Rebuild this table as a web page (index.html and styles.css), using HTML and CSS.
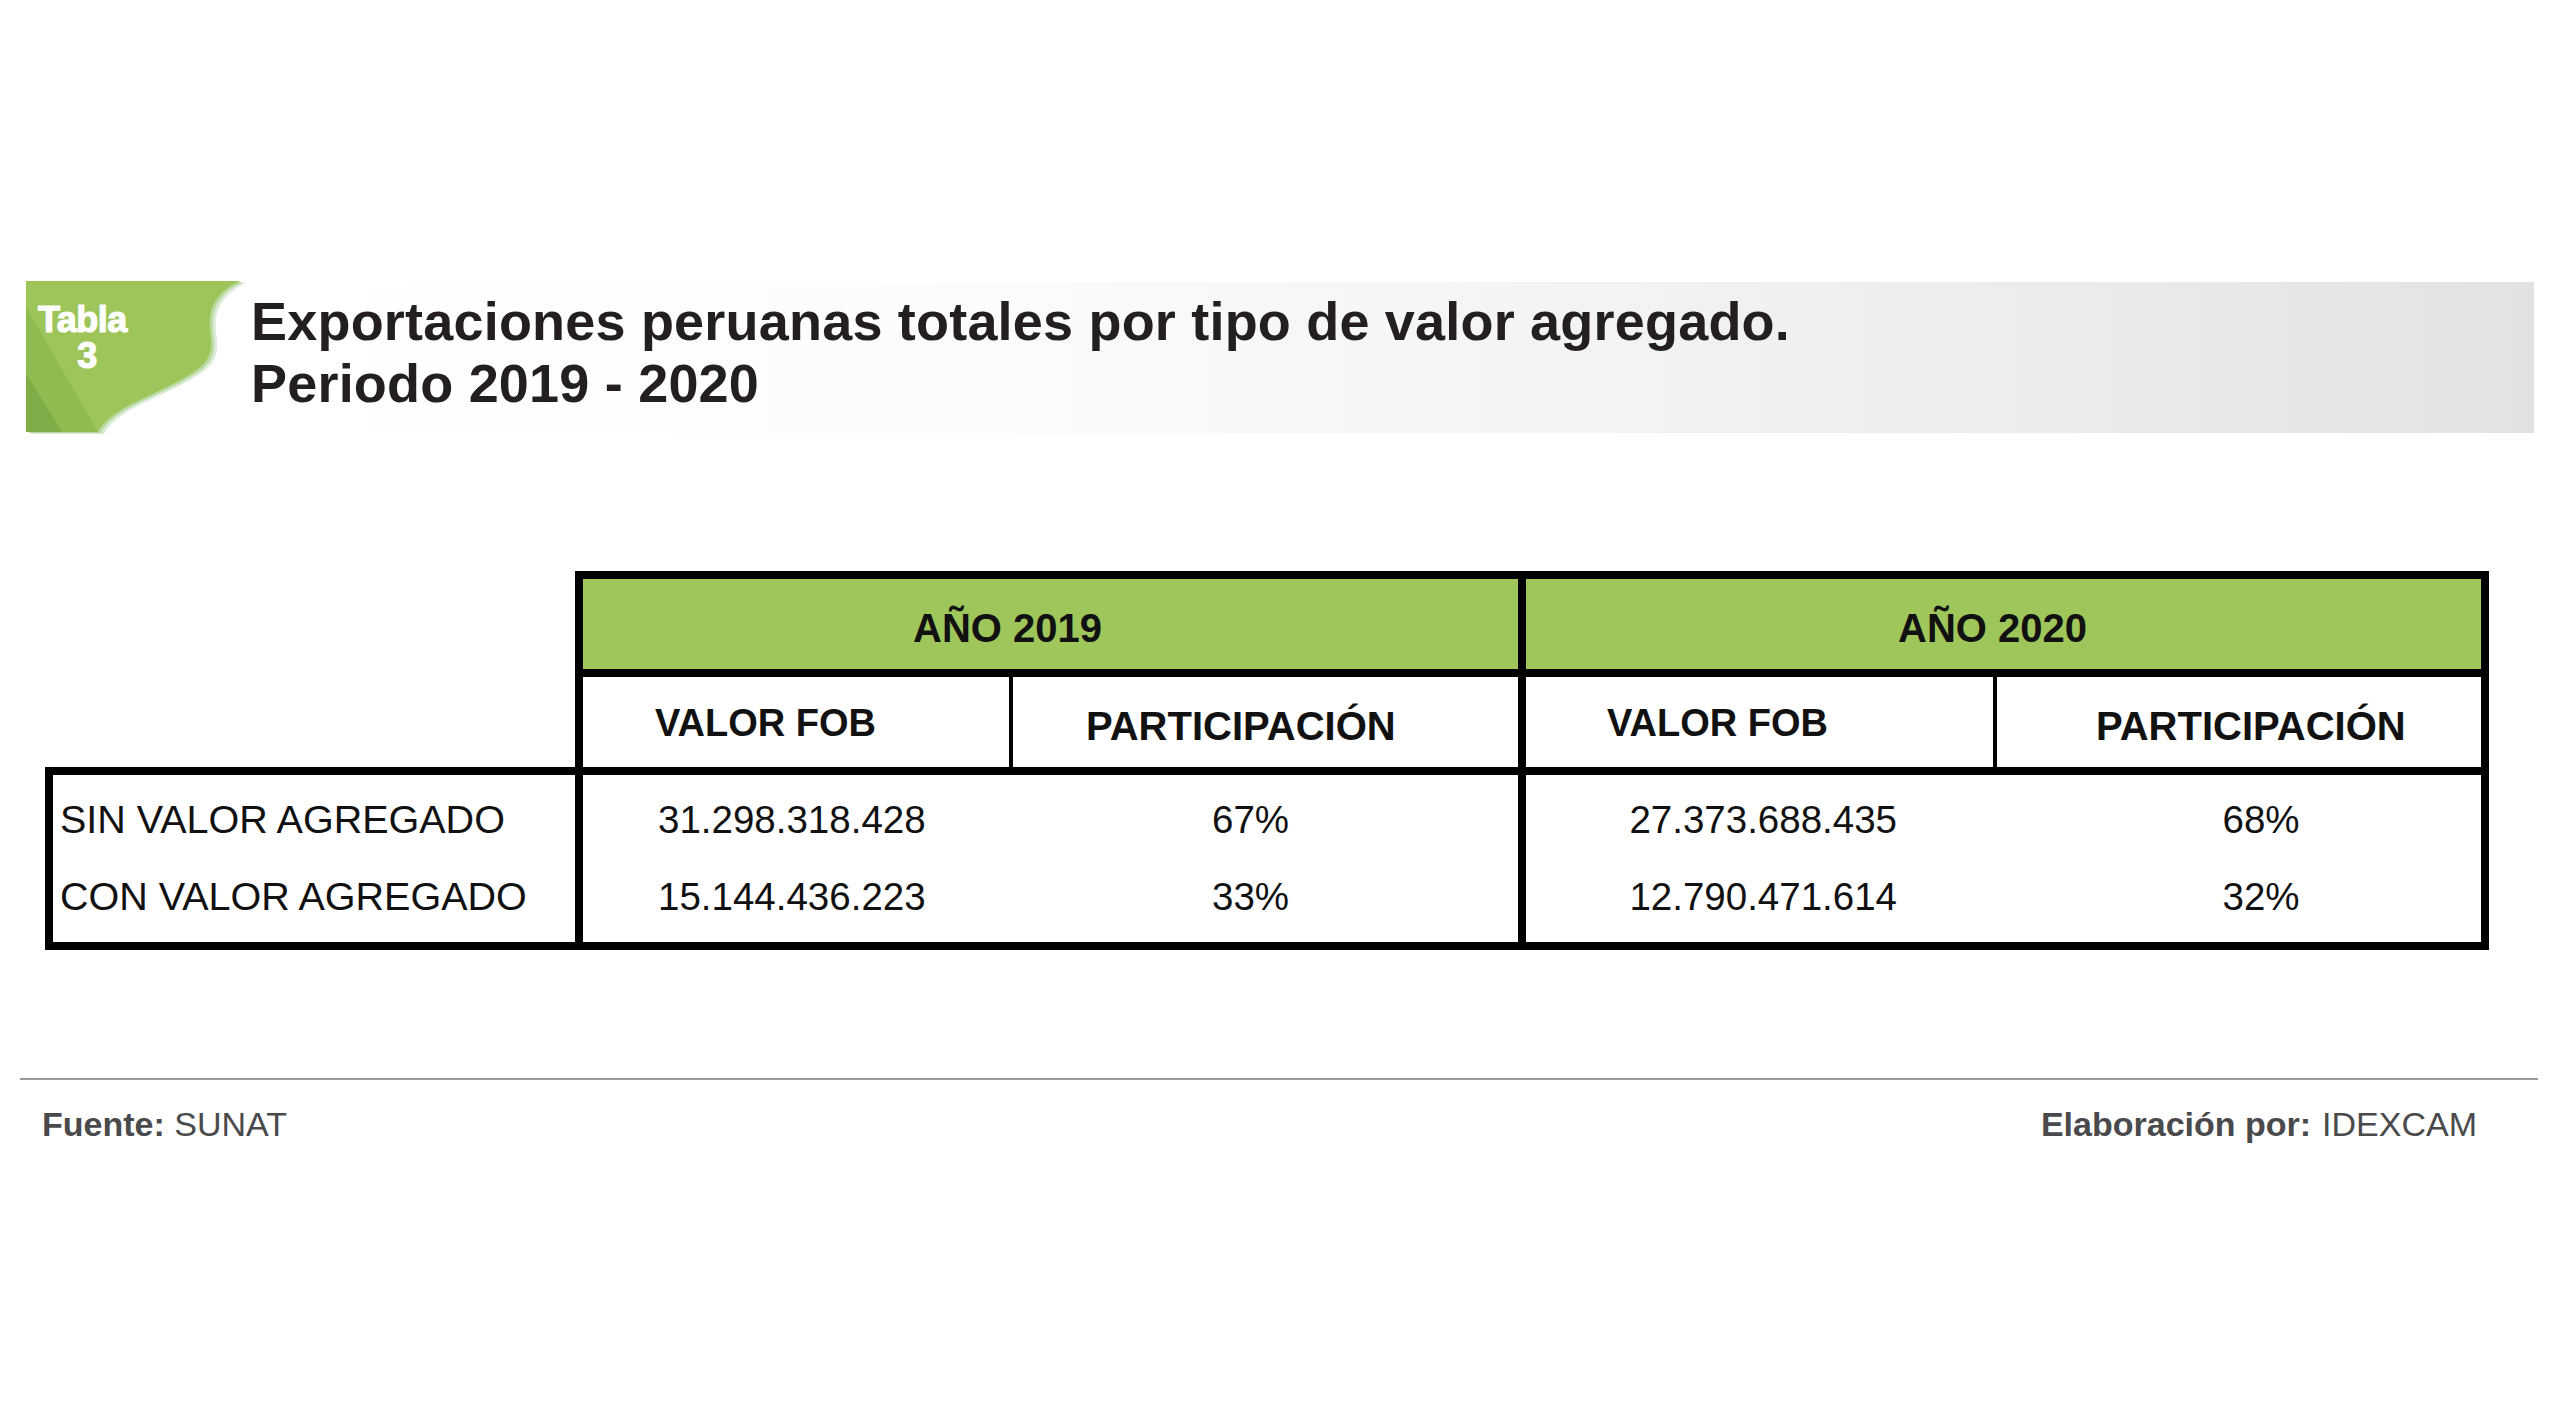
FILE: index.html
```html
<!DOCTYPE html>
<html lang="es">
<head>
<meta charset="utf-8">
<title>Tabla 3</title>
<link rel="stylesheet" href="styles.css">
</head>
<body>
<main class="page">
  <header class="title-row">
    <svg class="badge" width="214" height="152" viewBox="0 0 214 152" aria-label="Tabla 3">
      <path class="shade-2" transform="translate(6,2)" d="M0,0 H214 C200,6 186,18 184,36 C182,52 190,66 180,80 C168,96 130,110 100,126 C86,134 76,142 72,151 H0 Z"/>
      <path class="shade-1" transform="translate(3,1)" d="M0,0 H214 C200,6 186,18 184,36 C182,52 190,66 180,80 C168,96 130,110 100,126 C86,134 76,142 72,151 H0 Z"/>
      <path class="leaf" d="M0,0 H214 C200,6 186,18 184,36 C182,52 190,66 180,80 C168,96 130,110 100,126 C86,134 76,142 72,151 H0 Z"/>
      <polygon class="stripe-1" points="0,26 72,151 0,151"/>
      <polygon class="stripe-2" points="0,92 36,151 0,151"/>
      <text class="badge-text" x="12" y="51">Tabla</text>
      <text class="badge-text" x="61" y="87" text-anchor="middle">3</text>
    </svg>
    <div class="band">
      <h1 class="title">Exportaciones peruanas totales por tipo de valor agregado.<br>Periodo 2019 - 2020</h1>
    </div>
  </header>

  <section class="table">
    <div class="thead">
      <div class="years">
        <div class="year y1">AÑO 2019</div>
        <div class="year y2">AÑO 2020</div>
      </div>
      <div class="subs">
        <div class="sub s1">VALOR FOB</div>
        <div class="sub s2 part">PARTICIPACIÓN</div>
        <div class="sub s3">VALOR FOB</div>
        <div class="sub s4 part">PARTICIPACIÓN</div>
      </div>
    </div>
    <div class="tbody">
      <div class="col labels">
        <div class="cell">SIN VALOR AGREGADO</div>
        <div class="cell">CON VALOR AGREGADO</div>
      </div>
      <div class="group g2019">
        <div class="col c1">
          <div class="cell">31.298.318.428</div>
          <div class="cell">15.144.436.223</div>
        </div>
        <div class="col c2">
          <div class="cell">67%</div>
          <div class="cell">33%</div>
        </div>
      </div>
      <div class="group g2020">
        <div class="col c3">
          <div class="cell">27.373.688.435</div>
          <div class="cell">12.790.471.614</div>
        </div>
        <div class="col c4">
          <div class="cell">68%</div>
          <div class="cell">32%</div>
        </div>
      </div>
    </div>
  </section>

  <footer class="footer">
    <div class="rule"></div>
    <div class="foot-text">
      <p class="source"><b>Fuente:</b> SUNAT</p>
      <p class="credit"><b>Elaboración por:</b><span class="credit-name">IDEXCAM</span></p>
    </div>
  </footer>
</main>
</body>
</html>
```

FILE: styles.css
```css
* {
  box-sizing: border-box;
}

html, body {
  margin: 0;
  padding: 0;
  background: #ffffff;
}

body {
  width: 2560px;
  height: 1426px;
  overflow: hidden;
  font-family: "Liberation Sans", Arial, sans-serif;
  color: #111111;
}

.page {
  padding-top: 281px;
}

/* ---------- Title row ---------- */
.title-row {
  display: flex;
  height: 152px;
}

.badge {
  flex: 0 0 214px;
  margin-left: 26px;
  overflow: visible;
  position: relative;
  z-index: 1;
}

.leaf { fill: #9dc55a; }
.shade-1 { fill: #b9d99f; }
.shade-2 { fill: #dcebd7; }
.stripe-1 { fill: #8fbb50; }
.stripe-2 { fill: #80ad47; }

.badge-text {
  font-family: "Liberation Sans", Arial, sans-serif;
  font-weight: 700;
  font-size: 36px;
  letter-spacing: -0.5px;
  fill: #ffffff;
  stroke: #ffffff;
  stroke-width: 1.2px;
}

.band {
  flex: 1;
  margin-top: 1px;
  margin-right: 26px;
  height: 151px;
  padding: 8px 0 0 11px;
  background: linear-gradient(to right, #ffffff 0%, #fcfcfc 30%, #f3f3f4 60%, #ebebec 80%, #e2e2e4 100%);
}

.title {
  margin: 0;
  font-family: "Liberation Sans", Arial, sans-serif;
  font-weight: 700;
  font-size: 54px;
  line-height: 62px;
  letter-spacing: 0.2px;
  color: #231f20;
}

/* ---------- Table ---------- */
.table {
  margin-top: 138px;
  margin-left: 45px;
  width: 2444px;
}

.thead {
  margin-left: 530px;
  width: 1914px;
  border: 8px solid #000;
  border-bottom: 0;
}

.years {
  display: grid;
  grid-template-columns: 943px 955px;
  height: 98px;
  border-bottom: 8px solid #000;
  background: #9fc65a;
}

.year {
  font-weight: 700;
  font-size: 40px;
  line-height: 40px;
  padding-top: 29px;
  text-align: center;
}

.y1 {
  border-right: 8px solid #000;
  padding-right: 86px;
}

.y2 {
  padding-right: 22px;
}

.subs {
  display: grid;
  grid-template-columns: 430px 513px 471px 484px;
  height: 90px;
}

.sub {
  font-weight: 700;
  font-size: 38px;
  line-height: 40px;
  padding-top: 26px;
}

.sub.part {
  font-size: 40px;
  padding-top: 29px;
}

.s1 { border-right: 4px solid #000; padding-left: 72px; }
.s2 { border-right: 8px solid #000; padding-left: 73px; }
.s3 { border-right: 4px solid #000; padding-left: 81px; }
.s4 { padding-left: 99px; }

.tbody {
  display: flex;
  height: 183px;
  border: 8px solid #000;
}

.col {
  padding-top: 6px;
  font-size: 38.5px;
  line-height: 77px;
}

.labels {
  flex: 0 0 530px;
  border-right: 8px solid #000;
  padding-left: 7px;
  font-size: 39.5px;
}

.group {
  display: flex;
}

.g2019 {
  flex: 0 0 943px;
  border-right: 8px solid #000;
}

.g2020 {
  flex: 0 0 955px;
}

.c1 {
  flex: 0 0 430px;
  padding-left: 75px;
}

.c2 {
  flex: 0 0 505px;
  text-align: center;
  padding-right: 30px;
}

.c3 {
  flex: 0 0 471px;
  text-align: right;
  padding-right: 100px;
}

.c4 {
  flex: 0 0 484px;
  text-align: center;
  padding-left: 44px;
}

.cell {
  white-space: nowrap;
}

/* ---------- Footer ---------- */
.footer {
  margin-top: 128px;
}

.rule {
  height: 2px;
  margin: 0 22px 0 20px;
  background: #9a9a9a;
}

.foot-text {
  display: flex;
  justify-content: space-between;
  margin-top: 27px;
  padding: 0 83px 0 42px;
  font-size: 34px;
  line-height: 34px;
  color: #4a4a4c;
}

.foot-text p {
  margin: 0;
}

.foot-text b {
  font-weight: 700;
}

.credit-name {
  margin-left: 11px;
}
```
